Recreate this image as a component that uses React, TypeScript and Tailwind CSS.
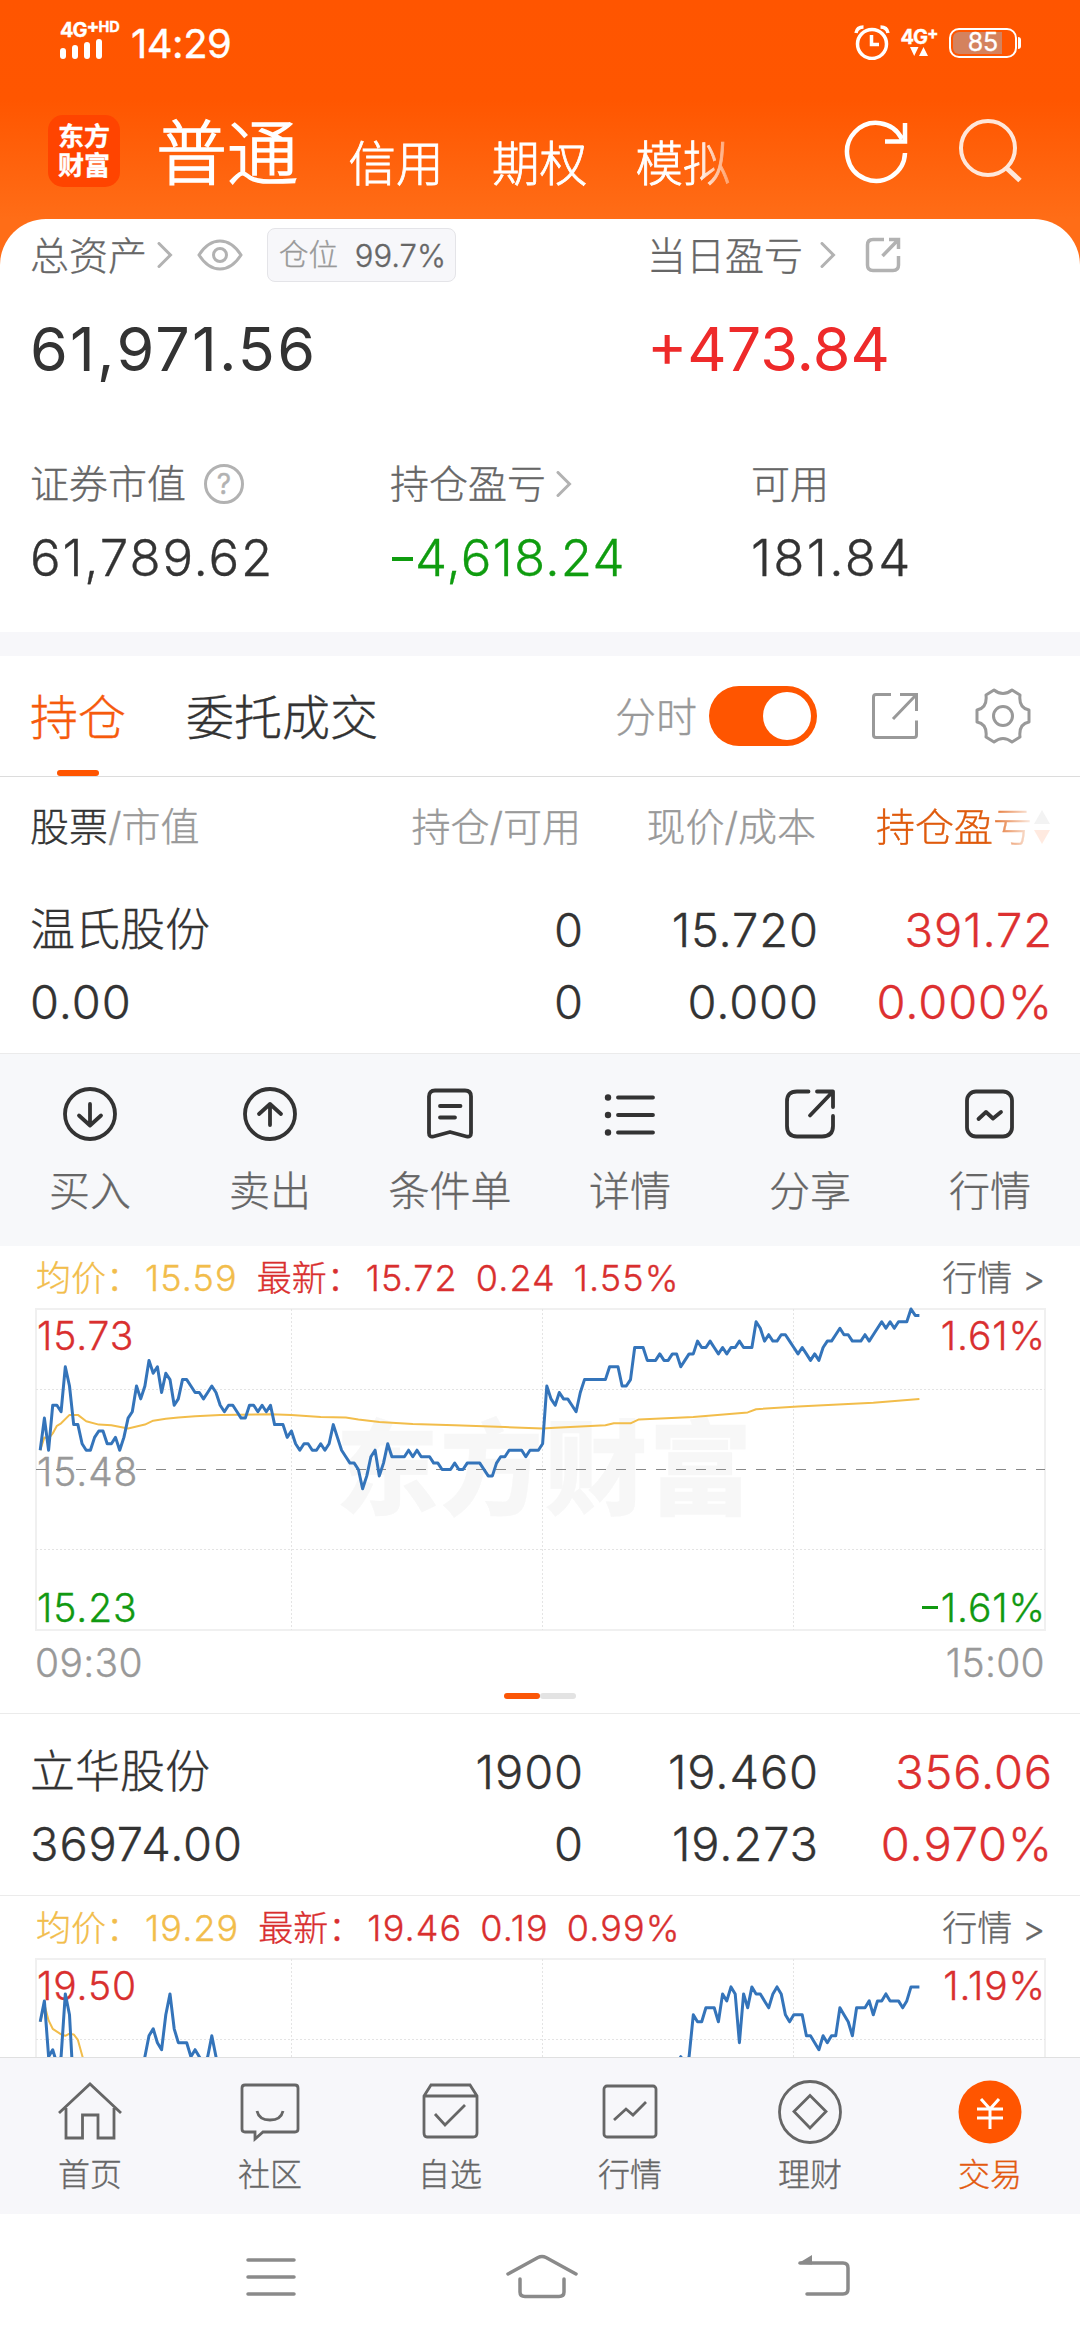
import React from "react";

// price per minute, in ticks (0.01) above or below yesterday's close
const WENSHI_PRICE = [
  3, 8, 3, 10, 10, 9, 16, 13, 7, 7, 4, 3, 3, 5, 6, 6, 4, 4, 5, 3, 5, 8, 9, 13, 11, 13, 17, 15, 16, 12,
  15, 14, 10, 11, 14, 14, 13, 12, 12, 11, 12, 13, 12, 10, 9, 10, 10, 9, 8, 8, 10, 10, 9, 10, 9, 10, 7, 7, 7, 5,
  6, 4, 3, 4, 4, 3, 3, 4, 3, 4, 7, 5, 3, 2, 1, 1, 0, -3, -1, 2, 3, -1, 1, 4, 2, 2, 2, 2, 3, 2,
  3, 2, 2, 2, 1, 1, 0, 0, 0, 1, 0, 0, 1, 1, 1, 1, 0, -1, -1, 1, 2, 2, 3, 3, 3, 3, 2, 3, 3, 3,
  4, 13, 11, 10, 12, 11, 11, 10, 9, 12, 14, 14, 14, 14, 14, 14, 16, 16, 16, 13, 13, 14, 19, 19, 19, 17, 17, 17, 18, 17,
  17, 18, 18, 16, 17, 18, 18, 20, 19, 19, 20, 19, 18, 19, 18, 19, 19, 20, 19, 19, 19, 23, 22, 20, 21, 20, 20, 21, 21, 20,
  19, 18, 19, 18, 17, 18, 17, 19, 20, 20, 21, 22, 21, 21, 20, 20, 20, 21, 20, 21, 22, 23, 22, 23, 22, 23, 23, 23, 25, 24,
  24,
];

const WENSHI_AVERAGE: [number, number][] = [
  [1, 3], [2, 5], [3, 4.8], [4, 5.6], [5, 6.8], [6, 7.2], [8, 8.5], [10, 8.5], [12, 7.5], [15, 7], [18, 6.9],
  [22, 6.4], [24, 6.7], [26, 7], [28, 7.6], [31, 7.9], [34, 8.1], [38, 8.3], [44, 8.5], [56, 8.6], [61, 8.5],
  [68, 8.2], [74, 8.1], [77, 7.8], [82, 7.4], [90, 7.1], [100, 6.9], [112, 6.6], [121, 6.4], [124, 6.5],
  [130, 6.7], [136, 6.9], [138, 7.2], [142, 7.2], [144, 7.8], [157, 8.2], [170, 8.9], [172, 9.4], [182, 9.8],
  [200, 10.4], [211, 11],
];

const LIHUA_PRICE = [
  14, 17, 9, 10, 8, 9, 18, 15, 4, 2, ...Array(14).fill(2), 5, 9, 12, 13, 11, 10, 15, 18, 13, 11,
  11, 11, 9, 10, 9, 8, 9, 12, 9, 5, ...Array(108).fill(2), 8, 9, 8, 9,
  15, 14, 14, 16, 16, 16, 14, 18, 17, 19, 18, 11, 18, 16, 19, 18, 18, 17, 16, 18, 19, 18, 15, 14, 15, 15, 15, 12, 12, 11,
  10, 12, 11, 12, 12, 16, 15, 14, 12, 16, 16, 16, 17, 15, 17, 17, 18, 17, 17, 17, 16, 17, 19, 19, 19,
];

const LIHUA_AVERAGE: [number, number][] = [
  [1, 14], [2, 16.5], [3, 14.2], [4, 13], [6, 12.2], [7, 12], [8, 12.3], [9, 12.2], [10, 11.4], [11.2, 8.8],
  [12, 5], [211, 2],
];

const CHART_W = 1009;
const CHART_H = 321;

type ChartProps = {
  price: number[];
  average: [number, number][];
  range: number;
  high: string;
  base?: string;
  low?: string;
  percent: string;
  watermark?: string;
};

const Chart: React.FC<ChartProps> = ({ price, average, range, high, base, low, percent, watermark }) => {
  const x = (minute: number) => ((minute * CHART_W) / 241).toFixed(1);
  const y = (tick: number) => (CHART_H / 2 - (tick * CHART_H) / 2 / range).toFixed(1);
  const priceLine = price.map((p, i) => `${x(i + 1)},${y(p)}`).join(" ");
  const averageLine = average.map(([m, p]) => `${x(m)},${y(p)}`).join(" ");

  return (
    <div className="relative ml-9 h-[321px] w-[1009px] shrink-0 text-[39px] leading-none tracking-[0.9px]">
      {watermark && (
        <div className="absolute inset-x-0 top-[106px] pl-2 text-center text-[103px] leading-[110px] font-black tracking-[1.5px] text-[#f7f7f7]">
          {watermark}
        </div>
      )}
      <div className="absolute top-[7px] left-px text-[#d92f2f]">{high}</div>
      {base && <div className="absolute top-[143px] left-px text-[#999]">{base}</div>}
      {low && <div className="absolute bottom-[3px] left-px text-[#119911]">{low}</div>}
      <div className="absolute top-[7px] -right-px text-[#d92f2f]">{percent}</div>
      {low && (
        <div className="absolute -right-px bottom-[3px] flex items-center text-[#119911]">
          <i className="mr-[3px] h-[3px] w-4 bg-[#119911]" />
          {percent}
        </div>
      )}
      <svg className="absolute inset-0 overflow-visible" width={CHART_W} height={CHART_H} fill="none">
        <rect x="0" y="0" width={CHART_W} height={CHART_H} stroke="#f0f0f0" strokeWidth="2" />
        <g stroke="#e4e4e4" strokeWidth="1" strokeDasharray="2 2">
          <path d="M0 80.5H1009M0 240.5H1009M255.5 0V321M506.5 0V321M757.5 0V321" />
        </g>
        <path d="M0 160.5H1009" stroke="#888" strokeWidth="1" strokeDasharray="10 10" />
        <polyline points={averageLine} stroke="#f2bd4b" strokeWidth="2" strokeLinejoin="round" />
        <polyline points={priceLine} stroke="#3474ba" strokeWidth="3" strokeLinejoin="round" />
      </svg>
    </div>
  );
};

const QuoteLine: React.FC<{ average: string; latest: string; change: string; percent: string }> = (props) => (
  <div className="flex h-[63px] shrink-0 items-center pt-px pr-[35px] pl-9 text-[36px] leading-none tracking-[1.1px]">
    <span className="text-[35px] tracking-normal text-[#f2bd4b]">均价：</span>
    <span className="ml-1 text-[#f2bd4b]">{props.average}</span>
    <span className="ml-[19px] text-[35px] tracking-normal text-[#d92f2f]">最新：</span>
    <span className="ml-1 text-[#d92f2f]">{props.latest}</span>
    <span className="ml-[18px] text-[#d92f2f]">{props.change}</span>
    <span className="ml-[18px] text-[#d92f2f]">{props.percent}</span>
    <span className="ml-auto text-[35px] tracking-normal text-[#666]">行情 &gt;</span>
  </div>
);

type HoldingProps = {
  name: string;
  value: string;
  shares: string;
  available: string;
  price: string;
  cost: string;
  profit: string;
  percent: string;
};

const Holding: React.FC<HoldingProps> = (props) => (
  <div className="grid h-[182px] shrink-0 grid-cols-[305px_249px_235px_234px] grid-rows-[72px_72px] border-b border-[#ebebeb] pt-[22px] pl-[30px] text-right text-[47px] leading-[72px] tracking-[0.9px] text-[#333]">
    <div className="text-left text-[45px] tracking-normal">{props.name}</div>
    <div>{props.shares}</div>
    <div>{props.price}</div>
    <div className="text-[#dd3030]">{props.profit}</div>
    <div className="text-left">{props.value}</div>
    <div>{props.available}</div>
    <div>{props.cost}</div>
    <div className="text-[#dd3030]">{props.percent}</div>
  </div>
);

const Chevron = ({ className }: { className: string }) => (
  <svg className={className} width="16" height="26" viewBox="0 0 16 26" fill="none" stroke="#b2b2b2" strokeWidth="3">
    <path d="M2 1.5L13.5 13L2 24.5" strokeLinecap="round" />
  </svg>
);

const ACTIONS = [
  {
    label: "买入",
    icon: (
      <>
        <circle cx="27" cy="27" r="25" />
        <path d="M27 17V38M16 28.5L27 38.5L38 28.5" />
      </>
    ),
  },
  {
    label: "卖出",
    icon: (
      <>
        <circle cx="27" cy="27" r="25" />
        <path d="M27 38V17M16 27L27 17L38 27" />
      </>
    ),
  },
  {
    label: "条件单",
    icon: (
      <path d="M12 3.5H42Q48 3.5 48 9.5V46Q48 50.5 43.5 49.5L27 45L10.5 49.5Q6 50.5 6 46V9.5Q6 3.5 12 3.5ZM17 19H37.5M17 30.5H32" />
    ),
  },
  {
    label: "详情",
    icon: (
      <>
        <path d="M15 10.5H50M15 28H50M15 45.5H50" />
        <g fill="#333" stroke="none">
          <circle cx="5" cy="10.5" r="3.2" />
          <circle cx="5" cy="28" r="3.2" />
          <circle cx="5" cy="45.5" r="3.2" />
        </g>
      </>
    ),
  },
  {
    label: "分享",
    icon: <path d="M25.5 4.5H14Q4 4.5 4 14.5V39Q4 49.5 14 49.5H39Q50 49.5 50 39V29M34 4.5H50V20M49 5.5L27 28.5" />,
  },
  {
    label: "行情",
    icon: (
      <>
        <rect x="4" y="4.5" width="45" height="45" rx="9" />
        <path d="M15.5 32L23 25L30 31.5L38 25" />
      </>
    ),
  },
];

const TABS = [
  {
    label: "首页",
    icon: <path d="M2 33L33 4L64 33M9 28V58H25.5V35H41V58H57V28" />,
  },
  {
    label: "社区",
    icon: (
      <>
        <path d="M8 5H58Q61 5 61 8V49Q61 52 58 52H26L18 59V52H8Q5 52 5 49V8Q5 5 8 5Z" />
        <path d="M20 31Q22 40 33 40Q44 40 46 31" />
      </>
    ),
  },
  {
    label: "自选",
    icon: (
      <>
        <path d="M7 16L14 5H53L60 16V53Q60 57 56 57H10Q7 57 7 53ZM7 16H60" />
        <path d="M18 34L28 45L48 25" />
      </>
    ),
  },
  {
    label: "行情",
    icon: (
      <>
        <rect x="7" y="6" width="52" height="51" rx="3" />
        <path d="M17 40L29 29L36 35L49 22" />
      </>
    ),
  },
  {
    label: "理财",
    icon: (
      <>
        <circle cx="33" cy="32" r="30.5" />
        <path d="M33 15.5L49 31.5L33 48L17 31.5Z" />
      </>
    ),
  },
];

export default function App() {
  return (
    <div className="flex h-[2340px] w-[1080px] flex-col overflow-hidden bg-white font-['Inter','Noto_Sans_CJK_SC',sans-serif] font-light [-webkit-text-stroke:0.35px]">
      <div className="shrink-0 bg-[linear-gradient(180deg,#ff5500_0,#ff5600_100px,#ff6d17_219px)]">
        {/* Status bar */}
        <div className="flex h-[87px] items-center pr-[59px] pl-[60px] leading-none font-normal text-white">
          <div className="w-[60px] pb-2">
            <div className="flex h-[18px] items-start text-[20px] leading-[19px] font-bold tracking-[-1px]">
              4G<span className="text-[19px] leading-[12px]">+</span>
              <span className="text-[14.5px] leading-[12px] tracking-normal">HD</span>
            </div>
            <div className="flex h-5 items-end gap-1.5">
              <i className="h-[11px] w-1.5 rounded-sm bg-white" />
              <i className="h-[14px] w-1.5 rounded-sm bg-white" />
              <i className="h-[17px] w-1.5 rounded-sm bg-white" />
              <i className="h-5 w-1.5 rounded-sm bg-white" />
            </div>
          </div>
          <span className="ml-[11px] text-[40px] tracking-[-0.5px]">14:29</span>
          <svg className="mb-1 ml-auto" width="36" height="36" viewBox="0 0 36 36" fill="none" stroke="#fff">
            <circle cx="18" cy="20" r="14.5" strokeWidth="3.5" />
            <path d="M17.5 11V20.5H25" strokeWidth="3.5" />
            <path d="M2 9Q3 3 9.5 3M34 9Q33 3 26.5 3" strokeWidth="3.5" />
          </svg>
          <div className="ml-[11px] flex w-9 flex-col items-center pb-1">
            <div className="flex text-[20px] leading-5 font-bold tracking-[-1px]">
              4G<span className="text-[17px] leading-[13px]">+</span>
            </div>
            <svg width="18" height="9" viewBox="0 0 18 9" fill="#fff">
              <path d="M0 0H8.5L4.2 9ZM9 9H18L13.5 0Z" />
            </svg>
          </div>
          <div className="mb-0.5 ml-3 flex items-center">
            <div className="relative flex h-[30px] w-[68px] items-center justify-center rounded-[10px] border-[2.5px] border-white text-[25px]">
              <i className="absolute top-0.5 bottom-0.5 left-0.5 w-[49px] rounded-l-md bg-[#d4825e]" />
              <span className="relative">85</span>
            </div>
            <i className="ml-px h-3 w-[3px] rounded-r bg-white" />
          </div>
        </div>

        {/* Account type switcher */}
        <div className="flex h-[132px] items-start pl-12 text-white">
          <div className="mt-7 flex h-[72px] w-[72px] flex-col items-center justify-center rounded-[15px] bg-[#ff4400] text-[26px] leading-[29px] font-bold">
            <span>东方</span>
            <span>财富</span>
          </div>
          <div className="ml-9 flex h-[104px] w-[600px] items-end gap-[48.5px] text-[47.5px] leading-[55px] [-webkit-text-stroke:0.8px] [mask-image:linear-gradient(90deg,#000_540px,transparent_595px)]">
            <span className="mr-0.5 mb-[3px] text-[71px] leading-[70px] [-webkit-text-stroke:1.5px]">普通</span>
            <span>信用</span>
            <span>期权</span>
            <span>模拟</span>
          </div>
          <svg className="mt-[33px] ml-[88px]" width="64" height="64" viewBox="0 0 64 64" fill="none" stroke="#fff" strokeWidth="4.5">
            <path d="M61 33A29 29 0 1 1 58 19M61 3V21.5H41" />
          </svg>
          <svg className="mt-[31px] ml-[50px] opacity-85" width="66" height="66" viewBox="0 0 66 66" fill="none" stroke="#fff" strokeWidth="4">
            <circle cx="30" cy="30" r="27" />
            <path d="M48.5 50L62 62.5" strokeWidth="5" />
          </svg>
        </div>

        {/* Assets summary */}
        <div className="h-[413px] rounded-t-[46px] bg-white pt-[9px] leading-none text-[#333]">
          <div className="grid grid-cols-[617px_1fr] pl-[30px]">
            <div>
              <div className="flex h-[54px] items-center text-[39px] text-[#666]">
                总资产
                <Chevron className="ml-[10px]" />
                <svg className="ml-6" width="46" height="32" viewBox="0 0 46 32" fill="none" stroke="#b2b2b2" strokeWidth="3">
                  <path d="M2 16Q11 2 23 2T44 16Q35 30 23 30T2 16Z" />
                  <circle cx="23" cy="16" r="6.5" />
                </svg>
                <div className="ml-6 flex h-[54px] w-[189px] items-center justify-between rounded-lg border border-[#e4e4e8] bg-[#f7f7fa] pr-[9px] pl-[11px] text-[29.5px] text-[#999]">
                  仓位<span className="text-[31px] text-[#666]">99.7%</span>
                </div>
              </div>
              <div className="mt-[37px] text-[61px] font-normal tracking-[2.2px] [-webkit-text-stroke:0]">61,971.56</div>
            </div>
            <div>
              <div className="flex h-[54px] items-center text-[39px] text-[#666]">
                当日盈亏
                <Chevron className="ml-[17px]" />
                <svg className="ml-[29px]" width="36" height="36" viewBox="0 0 36 36" fill="none" stroke="#b2b2b2" strokeWidth="3.5">
                  <path d="M19 2.5H8Q2.5 2.5 2.5 8V28Q2.5 33.5 8 33.5H28Q33.5 33.5 33.5 28V19M24 2.5H33.5V12M33 3L17.5 19" />
                </svg>
              </div>
              <div className="mt-[37px] text-[61px] font-normal text-[#ee2a2a] [-webkit-text-stroke:0]">+473.84</div>
            </div>
          </div>
          <div className="mt-[83px] grid grid-cols-3 text-[51px] tracking-[1.8px]">
            <div className="pl-[30px]">
              <div className="mb-[28px] flex h-[41px] items-center text-[39px] tracking-normal text-[#666]">
                证券市值
                <div className="ml-[18px] flex h-10 w-10 items-center justify-center rounded-full border-[3px] border-[#b2b2b2] text-[28px] font-normal text-[#b2b2b2]">
                  ?
                </div>
              </div>
              61,789.62
            </div>
            <div className="pl-[30px]">
              <div className="mb-[28px] flex h-[41px] items-center text-[39px] tracking-normal text-[#666]">
                持仓盈亏
                <Chevron className="ml-2.5" />
              </div>
              <div className="flex items-center tracking-[1.2px] text-[#0f9c0f]">
                <i className="mt-0.5 mr-0.5 ml-0.5 h-1 w-[21px] bg-[#0f9c0f]" />
                4,618.24
              </div>
            </div>
            <div className="pl-[31px] tracking-[2.3px]">
              <div className="mb-[28px] flex h-[41px] items-center text-[39px] tracking-normal text-[#666]">可用</div>
              181.84
            </div>
          </div>
        </div>
      </div>

      <div className="h-6 shrink-0 bg-[#f7f7fa]" />

      {/* Positions */}
      <div className="flex min-h-0 flex-1 flex-col overflow-hidden">
        <div className="flex h-[121px] shrink-0 items-center border-b border-[#dcdcdc] pr-[49px] pl-[30px] leading-none">
          <div className="relative flex h-full items-center pt-[3px] text-[48px] text-[#f65a0c]">
            持仓
            <i className="absolute bottom-0 left-[27px] h-1.5 w-[42px] rounded-full bg-[#ff5500]" />
          </div>
          <div className="ml-[60px] pt-[3px] text-[48px] text-[#333]">委托成交</div>
          <div className="ml-auto pt-[3px] text-[41px] text-[#999]">分时</div>
          <div className="ml-3 flex h-[60px] w-[108px] items-center justify-end rounded-full bg-[#ff5500] pr-1.5">
            <i className="h-12 w-12 rounded-full bg-white" />
          </div>
          <svg className="ml-[54px]" width="48" height="48" viewBox="0 0 48 48" fill="none" stroke="#999" strokeWidth="3">
            <path d="M20 2.5H5Q2.5 2.5 2.5 5V43Q2.5 45.5 5 45.5H43Q45.5 45.5 45.5 43V28.5M29 2.5H45.5V19M45 3L22 27" />
          </svg>
          <svg className="ml-14" width="56" height="56" viewBox="0 0 56 56" fill="none" stroke="#999" strokeWidth="3">
            <path d="M19 2Q28 9 37 2L45 7Q43.5 20 54 22V34Q43.5 36 45 49L37 54Q28 47 19 54L11 49Q12.5 36 2 34V22Q12.5 20 11 7Z" strokeLinejoin="round" />
            <circle cx="28" cy="28" r="9.5" />
          </svg>
        </div>

        <div className="grid h-[95px] shrink-0 grid-cols-[302px_249px_235px_234px] items-center pt-[4px] pl-[30px] text-right text-[39px] leading-none text-[#999]">
          <div className="text-left">
            <span className="text-[#333]">股票</span>/市值
          </div>
          <div>持仓/可用</div>
          <div>现价/成本</div>
          <div className="flex items-center justify-end text-[#df5a0c] [mask-image:linear-gradient(90deg,#000_170px,rgba(0,0,0,0.12)_215px)]">
            持仓盈亏
            <svg className="ml-0.5" width="16" height="34" viewBox="0 0 16 34">
              <path d="M8 0L16 14H0Z" fill="#999" />
              <path d="M8 34L16 20H0Z" fill="#ff5500" />
            </svg>
          </div>
        </div>

        <Holding
          name="温氏股份"
          value="0.00"
          shares="0"
          available="0"
          price="15.720"
          cost="0.000"
          profit="391.72"
          percent="0.000%"
        />

        <div className="grid h-[192px] shrink-0 grid-cols-6 bg-[#f7f8fa] pt-[33px] text-[41px] leading-none text-[#666]">
          {ACTIONS.map((action) => (
            <div key={action.label} className="flex flex-col items-center gap-[30px]">
              <svg width="54" height="54" viewBox="0 0 54 54" fill="none" stroke="#333" strokeWidth="3.8" strokeLinecap="round" strokeLinejoin="round">
                {action.icon}
              </svg>
              <span>{action.label}</span>
            </div>
          ))}
        </div>

        <QuoteLine average="15.59" latest="15.72" change="0.24" percent="1.55%" />
        <Chart
          price={WENSHI_PRICE}
          average={WENSHI_AVERAGE}
          range={25}
          high="15.73"
          base="15.48"
          low="15.23"
          percent="1.61%"
          watermark="东方财富"
        />
        <div className="flex h-[63px] shrink-0 items-center justify-between pt-px pr-[35px] pl-[35px] text-[39px] leading-none tracking-[0.3px] text-[#999]">
          <span>09:30</span>
          <span>15:00</span>
        </div>
        <div className="flex h-[21px] shrink-0 justify-center border-b border-[#ebebeb]">
          <i className="h-1.5 w-9 rounded-full bg-[#fb5607]" />
          <i className="h-1.5 w-9 rounded-full bg-[#e3e3e3]" />
        </div>

        <Holding
          name="立华股份"
          value="36974.00"
          shares="1900"
          available="0"
          price="19.460"
          cost="19.273"
          profit="356.06"
          percent="0.970%"
        />
        <QuoteLine average="19.29" latest="19.46" change="0.19" percent="0.99%" />
        <Chart price={LIHUA_PRICE} average={LIHUA_AVERAGE} range={23} high="19.50" percent="1.19%" />
      </div>

      {/* Tab bar */}
      <div className="grid h-[157px] shrink-0 grid-cols-6 border-t border-[#e0e0e0] bg-[#f7f7fa] pt-[22px] text-[32px] leading-none text-[#666]">
        {TABS.map((tab) => (
          <div key={tab.label} className="flex flex-col items-center gap-[15px]">
            <svg width="66" height="64" viewBox="0 0 66 64" fill="none" stroke="#666" strokeWidth="2.8">
              {tab.icon}
            </svg>
            <span>{tab.label}</span>
          </div>
        ))}
        <div className="flex flex-col items-center gap-[15px] text-[#e35a10]">
          <svg width="66" height="64" viewBox="0 0 66 64" fill="none" stroke="#fff" strokeWidth="3">
            <circle cx="33" cy="32" r="31.5" fill="#ff5500" stroke="none" />
            <path d="M24 19L33 29L42 19M20 29H46M20 38H46M33 29V49" />
          </svg>
          <span>交易</span>
        </div>
      </div>

      {/* System navigation */}
      <div className="flex h-[126px] shrink-0 items-start bg-white pt-10">
        <svg className="ml-[245px]" width="52" height="46" viewBox="0 0 52 46" stroke="#8a8a8a" strokeWidth="3.5" strokeLinecap="round">
          <path d="M3 6H49M3 23H49M3 40H49" />
        </svg>
        <svg className="ml-[209px]" width="72" height="46" viewBox="0 0 72 46" fill="none" stroke="#8a8a8a" strokeWidth="3.5" strokeLinecap="round">
          <path d="M2 20L32 3.5Q36 1.5 40 3.5L70 20M14 25V38Q14 42.5 19 42.5H53Q58 42.5 58 38V25" />
        </svg>
        <svg className="ml-[219px]" width="54" height="46" viewBox="0 0 54 46" fill="none" stroke="#8a8a8a" strokeWidth="3.5">
          <path d="M3 9H46Q51 9 51 14V35Q51 40 46 40H10" strokeLinecap="round" />
          <path d="M1 9.5L15 1V10.5Z" fill="#8a8a8a" stroke="none" />
        </svg>
      </div>
    </div>
  );
}
